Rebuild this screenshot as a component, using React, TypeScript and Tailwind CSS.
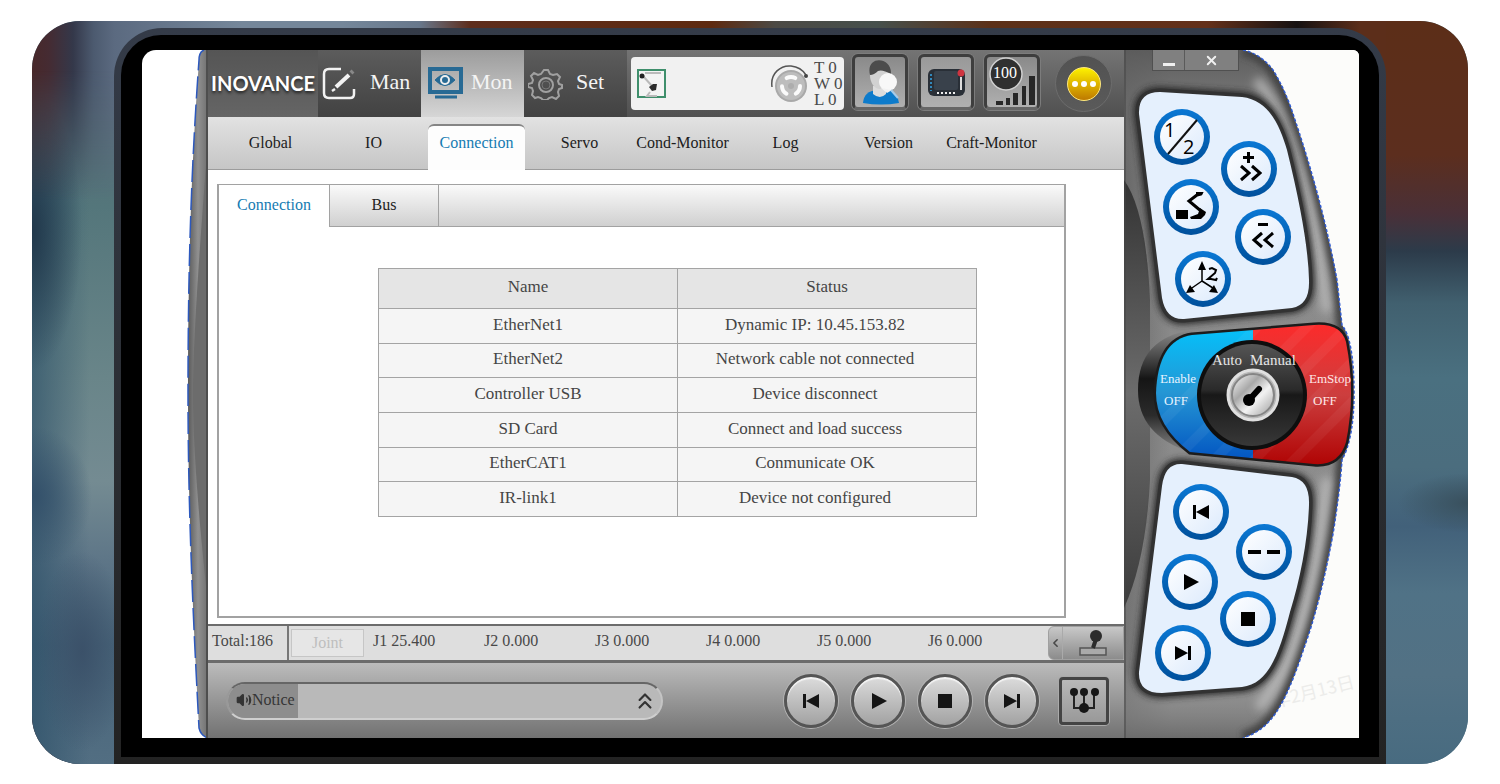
import React, { useState } from 'react'
import { ChevronLeft, ChevronsUp, Volume2, X } from 'lucide-react'

const subTabs = ['Global', 'IO', 'Connection', 'Servo', 'Cond-Monitor', 'Log', 'Version', 'Craft-Monitor']

const rows = [
    ['EtherNet1', 'Dynamic IP: 10.45.153.82'],
    ['EtherNet2', 'Network cable not connected'],
    ['Controller USB', 'Device disconnect'],
    ['SD Card', 'Connect and load success'],
    ['EtherCAT1', 'Conmunicate OK'],
    ['IR-link1', 'Device not configured'],
]

const joints = ['J1 25.400', 'J2 0.000', 'J3 0.000', 'J4 0.000', 'J5 0.000', 'J6 0.000']

const keys = [
    { name: 'Screen half', glyph: 'half', place: 'left-[30px] top-[59px]' },
    { name: 'Speed up', glyph: 'plus', place: 'left-[97px] top-[91px]' },
    { name: 'Robot', glyph: 'robot', place: 'left-[39px] top-[129px]' },
    { name: 'Speed down', glyph: 'minus', place: 'left-[111px] top-[159px]' },
    { name: 'Coordinates', glyph: 'axes', place: 'left-[51px] top-[201px]' },
    { name: 'Previous', glyph: 'prev', place: 'left-[49px] top-[434px]' },
    { name: 'Pause', glyph: 'dashes', place: 'left-[112px] top-[474px]' },
    { name: 'Play', glyph: 'play', place: 'left-[38px] top-[504px]' },
    { name: 'Stop', glyph: 'stop', place: 'left-[96px] top-[541px]' },
    { name: 'Next', glyph: 'next', place: 'left-[31px] top-[575px]' },
]

function Glyph({ name }: { name: string }) {
    switch (name) {
        case 'prev': return <path d="M20 21h3v14h-3zM36 21v14l-13-7z" />
        case 'next': return <path d="M20 21v14l13-7zM33 21h3v14h-3z" />
        case 'play': return <path d="M22 20v16l15-8z" />
        case 'stop': return <path d="M21 21h14v14H21z" />
        case 'dashes': return <path d="M12 26h13v4H12zM31 26h13v4H31z" />
        case 'plus': return (
            <>
                <path d="M26 11h3v4h4v3h-4v4h-3v-4h-4v-3h4z" />
                <path d="M20 25l8 7-8 7M31 25l8 7-8 7" fill="none" stroke="black" strokeWidth="3" />
            </>
        )
        case 'minus': return (
            <>
                <path d="M23 14h10v3H23z" />
                <path d="M27 24l-8 7 8 7M38 24l-8 7 8 7" fill="none" stroke="black" strokeWidth="3" />
            </>
        )
        case 'robot': return (
            <>
                <path d="M13 31h12v9H13zM27 38l8-3 2-6 6 4-1 3-4 4H28z" />
                <path d="M38 15l-4 1-8 6 12 10" fill="none" stroke="black" strokeWidth="3" />
                <path d="M33 14h6l-1 2" fill="none" stroke="black" strokeWidth="2" />
            </>
        )
        case 'half': return (
            <>
                <path d="M43 11L14 45" stroke="#111" strokeWidth="2" />
                <text x="10" y="28" fontSize="20" fontFamily="Open Sans, sans-serif">1</text>
                <text x="29" y="45" fontSize="20" fontFamily="Open Sans, sans-serif">2</text>
            </>
        )
        case 'axes': return (
            <>
                <path d="M27 30V15M27 30L14 39M27 30l14 9" stroke="black" strokeWidth="1.5" />
                <path d="M27 10l4 9h-8zM11 42l4-8 5 7zM43 42l-9-1 5-7z" />
                <path d="M34 18l3-1 4 2-1 3-7 6h3l5 1 1-2" fill="none" stroke="black" strokeWidth="2" />
            </>
        )
        default: return null
    }
}

function KeyButton({ name, glyph, place }: { name: string, glyph: string, place: string }) {
    return (
        <button
            aria-label={name}
            className={`absolute h-14 w-14 rounded-full bg-gradient-to-b from-[#0b78d4] to-[#00509c] ${place}`}
        >
            <span className="absolute inset-[6px] rounded-full bg-gradient-to-br from-white to-[#dceafc]" />
            <svg viewBox="0 0 56 56" className="absolute inset-0 h-14 w-14">
                <Glyph name={glyph} />
            </svg>
        </button>
    )
}

function MediaButton({ name, glyph }: { name: string, glyph: string }) {
    return (
        <button
            aria-label={name}
            className="h-[54px] w-[54px] rounded-full border-[3px] border-[#555] bg-gradient-to-b from-[#dcdcdc] to-[#a2a2a2] ring-1 ring-[#b4b4b4] shadow-[inset_0_2px_1px_#f4f4f4]"
        >
            <svg viewBox="0 0 56 56" className="-m-1 h-14 w-14" fill="#151515">
                <Glyph name={glyph} />
            </svg>
        </button>
    )
}

function TopNav() {
    return (
        <header className="flex h-[67px] items-center bg-gradient-to-b from-[#747474] to-[#505050]">
            <div className="flex h-full w-[110px] items-center justify-center bg-gradient-to-b from-[#555] to-[#656565] pb-[2px] font-['Lato',sans-serif] text-xl font-bold text-white [text-shadow:0_2px_3px_#222]">
                INOVANCE
            </div>

            <nav className="flex h-full text-[22px] text-[#f4f4f4]">
                <button className="flex w-[103px] items-center gap-3 bg-gradient-to-b from-[#5c5c5c] to-[#424242] pb-1 pl-1">
                    <svg viewBox="0 -2 36 36" className="h-9 w-9" fill="none" stroke="#f2f2f2" strokeWidth="2.5">
                        <path d="M19 3H7Q2 3 2 8v19q0 5 5 5h21q4 0 4-4v-5" />
                        <path d="M14 21L27 9" strokeWidth="4" />
                        <path d="M29 7l2-2" stroke="#888" strokeWidth="4" />
                        <path d="M10 25l3-2" />
                    </svg>
                    Man
                </button>
                <button className="flex w-[103px] items-center gap-2 bg-gradient-to-b from-[#9c9c9c] to-[#d6d6d6] pb-1 pl-[6px]">
                    <svg viewBox="0 0 36 36" className="h-9 w-9" fill="none" stroke="#286a94">
                        <path d="M3 5h31v23H3z" strokeWidth="4" />
                        <path d="M8 33h22" strokeWidth="3" />
                        <path d="M8 16q10-11 20 0q-10 11-20 0z" fill="#286a94" />
                        <circle cx="18" cy="16" r="4" fill="#286a94" stroke="#eee" strokeWidth="2" />
                    </svg>
                    Mon
                </button>
                <button className="flex w-[103px] items-center gap-3 bg-gradient-to-b from-[#5c5c5c] to-[#424242] pb-1 pl-1">
                    <svg viewBox="-1 0 36 36" className="h-9 w-9" fill="none" stroke="#a0a0a0" strokeWidth="2">
                        <path d="M15 6h4l2 4 3 1 4-1 3 3-2 4 1 3 3 1v3l-3 1-1 3 1 4-3 3-4-2-3 1-2 2h-4l-2-2-3-1-3 1-3-3 1-4-1-3-4-1v-3l4-1 1-3-2-4 3-3 4 2 3-1z" />
                        <circle cx="17" cy="21" r="7" />
                        <circle cx="17" cy="21" r="4" stroke="#777" strokeWidth="1" />
                    </svg>
                    Set
                </button>
            </nav>

            <div className="ml-1 flex h-[53px] flex-1 items-center rounded bg-[#f1f1f1] pl-[6px] text-[17px] leading-4 text-[#4a4a4a]">
                <svg viewBox="0 0 30 30" className="h-[30px] w-[30px]">
                    <path d="M1 1h27v27H1z" fill="#f4f4f4" stroke="#3f8f6c" strokeWidth="2" />
                    <path d="M6 7l9 10M8 4h16" stroke="#bbb" strokeWidth="2" />
                    <circle cx="5" cy="7" r="2.5" fill="#222" />
                    <path d="M12 18l4-3h4l-1 6-4 1z" fill="#2c2c2c" />
                    <path d="M13 23l-3 4h10" fill="none" stroke="#bbb" strokeWidth="2" />
                </svg>
                <svg viewBox="0 0 40 40" className="mr-1 ml-auto h-10 w-10">
                    <path d="M2 23C0 9 11 1 21 2q10 1 15 9" fill="none" stroke="#555" strokeWidth="1.5" />
                    <circle cx="36" cy="12" r="2" fill="#444" />
                    <circle cx="21" cy="22" r="16" fill="#a9a9a9" />
                    <circle cx="21" cy="22" r="14" fill="#bdbdbd" />
                    <circle cx="21" cy="22" r="9" fill="none" stroke="#fafafa" strokeWidth="4" strokeDasharray="9 9.8" strokeLinecap="round" />
                    <circle cx="21" cy="22" r="3" fill="#adadad" />
                </svg>
                <div className="w-[30px] whitespace-nowrap">
                    <p>T 0</p>
                    <p>W 0</p>
                    <p>L 0</p>
                </div>
            </div>

            <div className="mr-[7px] ml-2 flex gap-[10px] pb-[3px]">
                <button aria-label="User" className="h-14 w-14 rounded-md border-[3px] border-[#3e3e3e] border-b-[#666] bg-gradient-to-b from-[#8a8a8a] to-[#b0b0b0] ring-1 ring-[#7c7c7c]">
                    <svg viewBox="0 0 50 50" className="h-full w-full">
                        <path d="M8 46q1-12 14-13h10q11 2 12 13q-18 3-36 0z" fill="#0d7bcb" />
                        <path d="M18 29h13v8q-6 6-13 0z" fill="#ddd" />
                        <ellipse cx="25" cy="18" rx="10" ry="14" fill="#d2d2d2" />
                        <path d="M15 18C10-2 37-1 36 17q-9-5-13-3q-4 4-8 4z" fill="#4c4c4c" />
                        <circle cx="33" cy="25" r="9" fill="#f8f8f8" />
                        <path d="M26 31l6 5 5-3z" fill="#f2f2f2" />
                        <path d="M36 33l7 8" stroke="#a6cae8" strokeWidth="2" />
                    </svg>
                </button>
                <button aria-label="Teach pendant" className="h-14 w-14 rounded-md border-[3px] border-[#3e3e3e] border-b-[#666] bg-gradient-to-b from-[#999] to-[#b0b0b0] ring-1 ring-[#7c7c7c]">
                    <svg viewBox="0 0 50 50" className="h-full w-full">
                        <rect x="7" y="12" width="37" height="27" rx="6" fill="#292f37" />
                        <rect x="13" y="14" width="24" height="19" rx="2" fill="#39414b" />
                        <path d="M10 17v17" stroke="#3188bc" strokeWidth="2" strokeDasharray="2 2" />
                        <path d="M16 36h20" stroke="#eee" strokeWidth="2" strokeDasharray="2 2" />
                        <path d="M40 20v13" stroke="#ddd" strokeWidth="2" />
                        <circle cx="40" cy="16" r="3.5" fill="#cf3440" />
                    </svg>
                </button>
                <button aria-label="Speed 100" className="relative h-14 w-14 rounded-md border-[3px] border-[#3e3e3e] border-b-[#666] bg-gradient-to-b from-[#8a8a8a] to-[#b0b0b0] ring-1 ring-[#7c7c7c]">
                    <svg viewBox="0 0 50 50" className="h-full w-full">
                        <circle cx="19" cy="17" r="16" fill="#303030" stroke="#d0d0d0" strokeWidth="1.5" />
                        <path d="M9 44h7v4H9zM19 41h4v7h-4zM26 36h5v12h-5zM35 29h4v19h-4zM42 19h6v29h-6z" fill="#272727" />
                    </svg>
                    <span className="absolute top-1 left-[6px] text-base leading-6 text-white">100</span>
                </button>
            </div>
            <button aria-label="More" className="mr-3 ml-2 flex h-[57px] w-[57px] items-center justify-center rounded-full border border-[#6c6c6c] bg-gradient-to-b from-[#525252] to-[#5a5a5a]">
                <span className="flex h-[34px] w-[34px] items-center justify-center gap-[3px] rounded-full border border-[#ffe87a] bg-gradient-to-b from-[#fdf200] to-[#bd7900]">
                    <span className="h-[6px] w-[6px] rounded-full bg-white" />
                    <span className="h-[6px] w-[6px] rounded-full bg-white" />
                    <span className="h-[6px] w-[6px] rounded-full bg-white" />
                </span>
            </button>
        </header>
    )
}

function StatusBar() {
    return (
        <div className="flex h-[39px] border-t-2 border-b-[3px] border-[#6c6c6c] bg-[#dedede] text-base text-[#484848]">
            <div className="flex w-[81px] items-center border-r-2 border-[#777] pb-1 pl-1">Total:186</div>
            <button disabled className="my-[3px] ml-[2px] w-[73px] border border-[#c6c6c6] bg-[#e6e6e6] text-[#bebebe]">Joint</button>
            <div className="flex flex-1 items-center pb-1 pl-[9px]">
                {joints.map((joint) => (
                    <span key={joint} className="w-[111px]">{joint}</span>
                ))}
            </div>
            <div className="flex w-[76px] items-center rounded-l-md border border-[#a0a0a0] bg-gradient-to-b from-[#c8c8c8] to-[#8c8c8c]">
                <button aria-label="Expand" className="flex h-full w-[14px] items-center border-r border-[#aaa]">
                    <ChevronLeft size={14} strokeWidth={3} />
                </button>
                <button aria-label="Joystick" className="flex flex-1 justify-center">
                    <svg viewBox="0 0 30 28" className="h-7 w-[30px]">
                        <path d="M2 19h26v7H2z" fill="#aaa" stroke="#555" strokeWidth="1.5" />
                        <path d="M15 19l3-9" stroke="#2c2c2c" strokeWidth="4" />
                        <circle cx="18" cy="7" r="6" fill="#2c2c2c" />
                    </svg>
                </button>
            </div>
        </div>
    )
}

function BottomBar() {
    return (
        <footer className="flex h-[75px] items-center bg-gradient-to-b from-[#bcbcbc] to-[#727272] pr-[15px] pl-[18px]">
            <div className="flex h-[38px] w-[437px] items-center overflow-hidden rounded-full border-2 border-t-[#666] border-r-[#c4c4c4] border-b-[#cfcfcf] border-l-[#999] bg-[#b9b9b9]">
                <div className="flex h-full w-[70px] items-center bg-[#8d8d8d] pb-[2px] pl-2 text-base text-[#353535]">
                    <Volume2 size={16} fill="#333" strokeWidth={2} />
                    Notice
                </div>
                <button aria-label="Show notices" className="mr-[3px] ml-auto text-[#333]">
                    <ChevronsUp size={26} strokeWidth={2} />
                </button>
            </div>
            <div className="ml-auto flex items-center gap-[13px]">
                <MediaButton name="Previous" glyph="prev" />
                <MediaButton name="Play" glyph="play" />
                <MediaButton name="Stop" glyph="stop" />
                <MediaButton name="Next" glyph="next" />
            </div>
            <button aria-label="Network" className="ml-5 h-12 w-[50px] rounded border-[3px] border-[#444] bg-gradient-to-b from-[#b8b8b8] to-[#999] ring-1 ring-[#aaa]">
                <svg viewBox="0 0 44 42" className="h-full w-full" fill="#161616">
                    <path d="M12 13v15h20V13M22 13v15" fill="none" stroke="#222" strokeWidth="2" />
                    <circle cx="12" cy="12" r="4" />
                    <circle cx="22" cy="12" r="4" />
                    <circle cx="33" cy="12" r="4" />
                    <circle cx="22" cy="28" r="5" />
                </svg>
            </button>
        </footer>
    )
}

function LeftGrip() {
    return (
        <svg viewBox="0 0 66 688" className="h-[688px] w-[66px] shrink-0">
            <defs>
                <linearGradient id="leftGrip" gradientUnits="userSpaceOnUse" x1="46" y1="0" x2="66" y2="0">
                    <stop offset="0" stopColor="#5a5a5a" />
                    <stop offset=".5" stopColor="#909090" />
                    <stop offset="1" stopColor="#707070" />
                </linearGradient>
            </defs>
            <path d="M66 0h-4q-5 2-5 10C49 120 46 220 46 344s6 240 11 334q2 8 9 10z" fill="url(#leftGrip)" />
            <path d="M66 90C55 230 51 300 51 344s4 110 15 210z" fill="#6c6c6c" />
            <path d="M62 0q-5 2-5 10C49 120 46 220 46 344s6 240 11 334q2 8 9 10" fill="none" stroke="#2c58bd" strokeWidth="1.5" strokeDasharray="22 6" />
            <path d="M65 0v688" stroke="#4e4e4e" strokeWidth="2" />
        </svg>
    )
}

function RightGrip() {
    return (
        <aside className="relative w-[235px] shrink-0 overflow-hidden bg-[#fcfcfa]">
            <span className="absolute top-[626px] right-1 rotate-[-14deg] font-['Noto_Sans_CJK_SC',sans-serif] text-lg text-[#ececea]">年2月13日</span>
            <svg viewBox="0 0 235 688" className="absolute inset-0 h-[688px] w-[235px]">
                <defs>
                    <linearGradient id="body" x1="0" x2="1">
                        <stop offset="0" stopColor="#686868" />
                        <stop offset=".2" stopColor="#8a8a8a" />
                        <stop offset="1" stopColor="#8c8c8c" />
                    </linearGradient>
                    <linearGradient id="bodyShade" x1="0" y1="0" x2="0" y2="1">
                        <stop offset="0" stopColor="#5c5c5c" />
                        <stop offset=".18" stopColor="#777" stopOpacity="0" />
                        <stop offset=".9" stopColor="#aaa" stopOpacity=".2" />
                        <stop offset="1" stopColor="#6c6c6c" />
                    </linearGradient>
                    <linearGradient id="groove" x1="0" y1="0" x2="0" y2="1">
                        <stop offset="0" stopColor="#333" />
                        <stop offset=".5" stopColor="#6c6c6c" />
                        <stop offset="1" stopColor="#3c3c3c" />
                    </linearGradient>
                    <linearGradient id="blue" x1="0" y1="0" x2="0" y2="1">
                        <stop offset="0" stopColor="#00c6ff" />
                        <stop offset=".5" stopColor="#2596d4" />
                        <stop offset="1" stopColor="#0050c0" />
                    </linearGradient>
                    <linearGradient id="red" x1="0" y1="0" x2="0" y2="1">
                        <stop offset="0" stopColor="#ff2a2a" />
                        <stop offset=".5" stopColor="#cc3e3e" />
                        <stop offset="1" stopColor="#ae0000" />
                    </linearGradient>
                    <linearGradient id="drum" x1="0" y1="0" x2="0" y2="1">
                        <stop offset="0" stopColor="#8a8a8a" />
                        <stop offset=".4" stopColor="#151515" />
                        <stop offset=".7" stopColor="#2b2b2b" />
                        <stop offset="1" stopColor="#858585" />
                    </linearGradient>
                    <linearGradient id="disc" x1="0" y1="0" x2="0" y2="1">
                        <stop offset="0" stopColor="#555" />
                        <stop offset=".45" stopColor="#2a2a2a" />
                        <stop offset=".5" stopColor="#181818" />
                        <stop offset="1" stopColor="#383838" />
                    </linearGradient>
                    <linearGradient id="knob" x1="0" y1="0" x2="1" y2="1">
                        <stop offset="0" stopColor="#fff" />
                        <stop offset=".35" stopColor="#a8a8a8" />
                        <stop offset=".6" stopColor="#f2f2f2" />
                        <stop offset="1" stopColor="#999" />
                    </linearGradient>
                    <filter id="soft" x="-20%" y="-20%" width="140%" height="140%"><feGaussianBlur stdDeviation="3" /></filter>
                    <filter id="softer" x="-20%" y="-20%" width="140%" height="140%"><feGaussianBlur stdDeviation="5" /></filter>
                    <clipPath id="bodyClip">
                        <path d="M0 0h119Q137 4 149 20Q160 38 167 58Q198 148 213 230L218 275Q230 290 230 343Q230 388 218 410Q216 440 209 484Q196 554 180 598Q163 650 148 668Q137 682 119 688H0z" />
                    </clipPath>
                    <clipPath id="switchClip">
                        <path d="M68 285L190 275Q217 273 222 292Q232 343 222 392Q215 416 190 414L66 402Q32 376 32 343Q34 290 68 285z" />
                    </clipPath>
                </defs>

                {/* housing */}
                <g clipPath="url(#bodyClip)">
                    <path d="M0 0h235v688H0z" fill="url(#body)" />
                    <path d="M0 0h235v688H0z" fill="url(#bodyShade)" />
                    <path d="M119 0Q137 4 149 20Q160 38 167 58Q198 148 213 230L218 275V410Q216 440 209 484Q196 554 180 598Q163 650 148 668Q137 682 119 688" fill="none" stroke="#444" strokeWidth="12" filter="url(#soft)" />
                    <path d="M132 30Q148 46 166 92Q192 170 203 262M203 428Q194 510 177 570Q158 632 134 658" fill="none" stroke="#c4c4c4" strokeOpacity=".8" strokeWidth="9" filter="url(#softer)" />
                    <path d="M0 130Q22 160 26 250V430Q22 510 0 558z" fill="url(#groove)" />
                </g>
                <path d="M119 0Q137 4 149 20Q160 38 167 58Q198 148 213 230L218 275Q230 290 230 343Q230 388 218 410Q216 440 209 484Q196 554 180 598Q163 650 148 668Q137 682 119 688" fill="none" stroke="#2f5ad0" strokeWidth="1.5" strokeDasharray="3 2" />
                <path d="M1 0v688" stroke="#444" />

                {/* key pads */}
                <g stroke="#2c2c2c" strokeWidth="11" fill="#2c2c2c">
                    <path d="M36 42L118 47C145 50 156 76 163 100Q184 185 185 230Q186 255 168 258L60 269Q42 270 38 248L15 64Q14 42 36 42z" filter="url(#soft)" />
                    <path d="M58 414L168 427Q186 430 185 455C184 490 176 530 166 562C156 600 146 634 118 637L38 643Q14 643 15 622L38 436Q41 413 58 414z" filter="url(#soft)" />
                </g>
                <g fill="#e5f0fd" stroke="#323232" strokeWidth="7" style={{ paintOrder: 'stroke' }}>
                    <path d="M36 42L118 47C145 50 156 76 163 100Q184 185 185 230Q186 255 168 258L60 269Q42 270 38 248L15 64Q14 42 36 42z" />
                    <path d="M58 414L168 427Q186 430 185 455C184 490 176 530 166 562C156 600 146 634 118 637L38 643Q14 643 15 622L38 436Q41 413 58 414z" />
                </g>

                {/* enable / stop switch */}
                <path d="M68 280Q14 288 14 340Q14 385 66 402z" fill="url(#drum)" />
                <path d="M68 285L190 275Q217 273 222 292Q232 343 222 392Q215 416 190 414L66 402Q32 376 32 343Q34 290 68 285z" fill="#111" stroke="#1c1c1c" strokeWidth="5" />
                <g clipPath="url(#switchClip)">
                    <path d="M0 270h129v145H0z" fill="url(#blue)" />
                    <path d="M129 270h105v150H129z" fill="url(#red)" />
                    <path d="M20 390L140 270M50 410L190 270M80 420L230 270M110 430L240 300M150 430L240 340" stroke="#fff" strokeOpacity=".05" strokeWidth="10" />
                </g>
                <circle cx="128" cy="345" r="55" fill="#0e0e0e" />
                <circle cx="128" cy="345" r="51" fill="url(#disc)" />
                <circle cx="129" cy="345" r="25" fill="#b8b8b8" stroke="#e0e0e0" strokeWidth="3" />
                <circle cx="129" cy="345" r="21" fill="url(#knob)" stroke="#858585" strokeWidth="2" />
                <path d="M125 350l10-11" stroke="#000" strokeWidth="6" strokeLinecap="round" />
                <circle cx="125" cy="350" r="6" />
            </svg>

            <div className="absolute top-0 left-7 flex h-[21px] border border-t-0 border-[#505050] bg-[#808080] text-[#f0f0f0]">
                <button aria-label="Minimize" className="flex w-8 items-end justify-center border-r border-[#5a5a5a] pb-1">
                    <span className="h-[3px] w-3 bg-[#f0f0f0]" />
                </button>
                <button aria-label="Close" className="flex w-[53px] items-center justify-center">
                    <X size={15} strokeWidth={3} />
                </button>
            </div>

            {keys.map((key) => (
                <KeyButton key={key.name} {...key} />
            ))}

            <button className="absolute top-[318px] left-9 text-center text-[13px] leading-[22px] text-[#e8f4ff]">
                Enable<br /><span className="pr-1">OFF</span>
            </button>
            <button className="absolute top-[300px] left-[88px] flex gap-2 text-[15px] leading-5 text-[#e6e6e6]">
                <span>Auto</span>
                <span>Manual</span>
            </button>
            <button className="absolute top-[318px] left-[185px] text-left text-[13px] leading-[22px] text-[#ffe8e8]">
                EmStop<br /><span className="pl-1">OFF</span>
            </button>
        </aside>
    )
}

function App() {

    const [tab, setTab] = useState('Connection')

    return (
        <div className="bg-white px-8 pt-[21px] pb-5 font-['Liberation_Serif',serif]">
            <div className="relative overflow-hidden rounded-[48px] bg-[#4c6f80] px-[82px] pt-[7px]">

                {/* blurred backdrop */}
                <div className="absolute inset-x-[82px] top-0 h-14 bg-[linear-gradient(90deg,#5b6a80_0%,#75879a_10%,#75879a_18%,#68788c_24%,#5e2d1c_28%,#5e2a10_47%,#4c4a45_52%,#46504c_60%,#5c3018_69%,#64301a_86%,#161212_93%,#5c2e1a_98%)]" />
                <div className="absolute inset-y-0 left-0 w-[82px] bg-[linear-gradient(90deg,#48282a_0%,#452b32_20%,#34384a_50%,#4c5a6f_75%,#5b6a80_100%)]" />
                <div className="absolute inset-y-0 left-0 w-[82px] bg-[radial-gradient(ellipse_45px_100px_at_50px_630px,#3b5169_0%,transparent_100%),radial-gradient(ellipse_60px_70px_at_0_475px,#33506a_0%,transparent_100%),radial-gradient(ellipse_50px_140px_at_0_210px,#21384b_0%,transparent_100%),linear-gradient(90deg,#2c5068aa_0%,transparent_70%),linear-gradient(180deg,#4b5a6c_0%,#566b74_12%,#54767b_25%,#698589_48%,#748b92_62%,#5d7587_73%,#486479_84%,#526e82_100%)] [mask-image:linear-gradient(180deg,transparent_50px,black_180px)]" />
                <div className="absolute inset-y-0 right-0 w-[82px] bg-[radial-gradient(ellipse_70px_30px_at_82px_482px,#39505d_0%,transparent_100%),linear-gradient(180deg,#5c2e18_0%,#5c2e1e_18%,#493038_26%,#2c3b4a_31%,#41606f_38%,#4a7080_48%,#4b6d7e_60%,#42617a_68%,#507286_77%,#527184_88%,#486b80_100%)]" />

                <div className="relative rounded-t-[48px] bg-gradient-to-b from-[#343b48] to-[#232323] p-[7px]">
                    <div className="rounded-t-[40px] bg-black pt-[15px] pr-5 pb-[19px] pl-[21px]">
                        <div className="flex overflow-hidden rounded-tl-[14px] rounded-tr-md bg-white">

                            <LeftGrip />

                            <main className="flex min-w-0 flex-1 flex-col">
                                <TopNav />

                                <nav className="flex h-[53px] border-b border-[#9c9c9c] bg-gradient-to-b from-[#e2e2e2] to-[#c6c6c6] pl-[11px] text-base text-[#1c1c1c]">
                                    {subTabs.map((name) => (
                                        <button
                                            key={name}
                                            onClick={() => setTab(name)}
                                            className={name === tab
                                                ? 'mx-[3px] -mb-px mt-[7px] w-[97px] rounded-t-md border-t-2 border-[#858585] bg-[#fdfdfd] pb-[10px] text-[#157bb2]'
                                                : 'w-[103px]'}
                                        >
                                            {name}
                                        </button>
                                    ))}
                                </nav>

                                <section className="flex-1 bg-white pt-[14px] pr-[58px] pb-[6px] pl-[9px]">
                                    <div className="h-full border-2 border-t border-[#a2a2a2]">
                                        <div className="flex h-[42px] bg-gradient-to-b from-[#fafafa] to-[#cfcfcf] text-base text-[#222]">
                                            <button className="w-[110px] bg-white pb-[2px] text-[#157bb2]">Connection</button>
                                            <button className="w-[110px] border-x border-b border-[#a2a2a2] pb-[2px]">Bus</button>
                                            <div className="flex-1 border-b border-[#a2a2a2]" />
                                        </div>

                                        <div className="pt-[41px] pr-[87px] pl-[159px]">
                                            <table className="h-[249px] w-full table-fixed border-collapse text-center text-[17px] leading-5 text-[#454545]">
                                                <thead className="bg-[#e5e5e5]">
                                                    <tr className="h-10">
                                                        <th className="border border-[#a4a4a4] pb-1 font-normal">Name</th>
                                                        <th className="border border-[#a4a4a4] pb-1 font-normal">Status</th>
                                                    </tr>
                                                </thead>
                                                <tbody className="bg-[#f5f5f5]">
                                                    {rows.map(([name, status]) => (
                                                        <tr key={name}>
                                                            <td className="border border-[#a4a4a4] pb-[2px]">{name}</td>
                                                            <td className="border border-[#a4a4a4] pr-6 pb-[2px]">{status}</td>
                                                        </tr>
                                                    ))}
                                                </tbody>
                                            </table>
                                        </div>
                                    </div>
                                </section>

                                <StatusBar />
                                <BottomBar />
                            </main>

                            <RightGrip />
                        </div>
                    </div>
                </div>
            </div>
        </div>
    )
}

export default App
